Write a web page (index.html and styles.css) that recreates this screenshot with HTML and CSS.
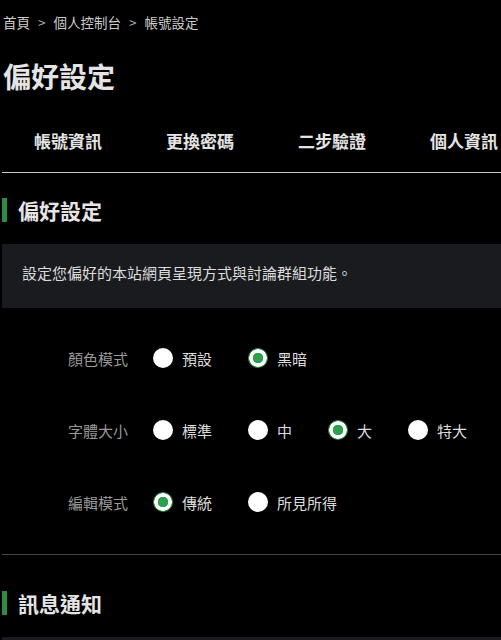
FILE: index.html
```html
<!DOCTYPE html>
<html lang="zh-Hant">
<head>
  <meta charset="UTF-8" />
  <meta name="viewport" content="width=device-width, initial-scale=1.0" />
  <title>偏好設定</title>
  <link rel="stylesheet" href="styles.css">
</head>
<body>
  <div class="crumb">首頁 <span class="sep">&gt;</span> 個人控制台 <span class="sep">&gt;</span> 帳號設定</div>
  <h1>偏好設定</h1>

  <div class="tabs">
    <div class="tab">帳號資訊</div>
    <div class="tab">更換密碼</div>
    <div class="tab">二步驗證</div>
    <div class="tab">個人資訊</div>
  </div>

  <h2>偏好設定</h2>
  <div class="note">設定您偏好的本站網頁呈現方式與討論群組功能。</div>

  <div class="row">
    <div class="label">顏色模式</div>
    <label class="opt"><input type="radio" name="color" /> 預設</label>
    <label class="opt"><input type="radio" name="color" checked /> 黑暗</label>
  </div>
  <div class="row">
    <div class="label">字體大小</div>
    <label class="opt"><input type="radio" name="size" /> 標準</label>
    <label class="opt"><input type="radio" name="size" /> 中</label>
    <label class="opt"><input type="radio" name="size" checked /> 大</label>
    <label class="opt"><input type="radio" name="size" /> 特大</label>
  </div>
  <div class="row">
    <div class="label">編輯模式</div>
    <label class="opt"><input type="radio" name="edit" checked /> 傳統</label>
    <label class="opt"><input type="radio" name="edit" /> 所見所得</label>
  </div>

  <hr />

  <h2 class="second">訊息通知</h2>
  <div class="note"></div>
</body>
</html>
```

FILE: styles.css
```css
body {
  font-family: "Noto Sans CJK TC", "Noto Sans", sans-serif;
  margin: 0;
  padding: 0 0 0 2px;
  background: #000;
  color: #ddd;
  overflow: hidden;
}
.crumb {
  padding: 12px 0 0 1px;
  line-height: 20px;
  font-size: 13.5px;
  color: #ccc;
}
.sep {
  margin: 0 5px;
  color: #aaa;
}
h1 {
  margin: 24px 0 0 1px;
  font-size: 28px;
  line-height: 40px;
  font-weight: bold;
  color: #e4e4e4;
}
.tabs {
  display: flex;
  margin-top: 18px;
  border-bottom: 1px solid #c8ccc8;
  overflow: hidden;
}
.tab {
  flex: 0 0 132px;
  text-align: center;
  padding: 15px 0 19px;
  line-height: 24px;
  font-size: 17px;
  font-weight: bold;
  color: #e4e4e4;
}
h2 {
  margin: 25px 0 0;
  padding-left: 11px;
  border-left: 5px solid #2e8b47;
  font-size: 21px;
  line-height: 24px;
  font-weight: bold;
  color: #e4e4e4;
}
.note {
  margin-top: 22px;
  background: #1a1b1e;
  padding: 17px 20px 23px;
  line-height: 24px;
  min-height: 24px;
  font-size: 15px;
  color: #ddd;
}
.row {
  display: flex;
  align-items: center;
  height: 72px;
  padding-left: 66px;
  white-space: nowrap;
}
.note + .row {
  margin-top: 14px;
}
.label {
  flex: 0 0 85px;
  font-size: 15px;
  color: #999;
}
.opt {
  flex: 0 0 auto;
  display: flex;
  align-items: center;
  gap: 9px;
  margin-right: 36px;
  font-size: 15px;
  color: #ddd;
}
.opt:last-child {
  margin-right: 0;
}
.opt input {
  appearance: none;
  flex: 0 0 20px;
  margin: 0;
  width: 20px;
  height: 20px;
  border-radius: 50%;
  background: #fff;
}
.opt input:checked {
  background: radial-gradient(circle, #2e9e4f 0 5px, #fff 5.5px 8.5px, #2e8b47 9px);
}
hr {
  margin: 16px 0 0;
  border: none;
  border-top: 1px solid #444;
}
h2.second {
  margin-top: 36px;
}
```
